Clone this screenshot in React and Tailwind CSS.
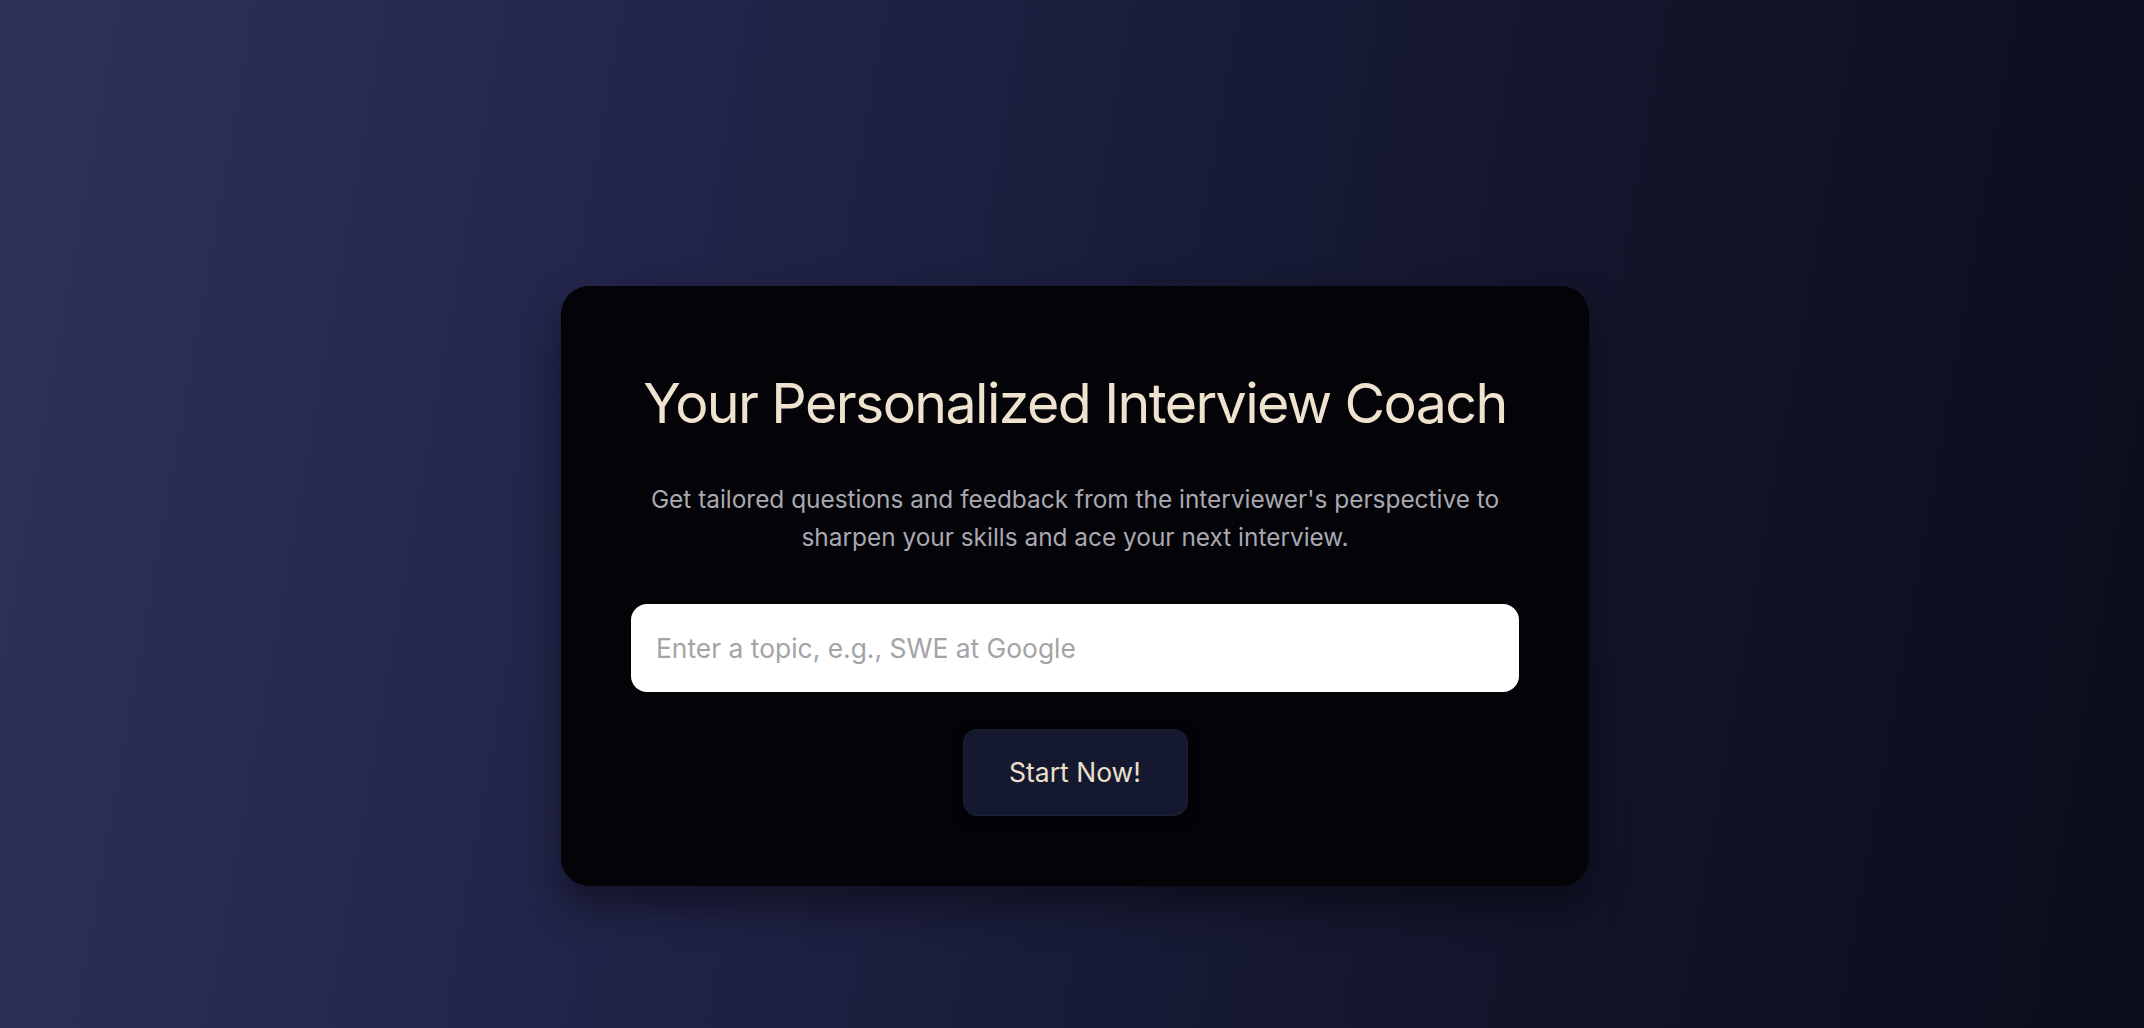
import { useState } from "react";

function App() {
  // Tema ingresado por el usuario
  const [topic, setTopic] = useState("");

  return (
    <div
      className="min-h-screen w-full flex flex-col items-center pt-[286px] bg-[linear-gradient(100deg,#30315a_0%,#22254a_30%,#14172e_65%,#0b0d1c_100%)]"
      style={{ fontFamily: "Inter, 'Noto Sans', sans-serif" }}
    >
      {/* Tarjeta principal */}
      <div className="ml-[6px] w-[1028px] rounded-[28px] bg-[#030308] shadow-[0_20px_40px_rgba(0,0,0,0.45)] px-[70px] pt-[87px] pb-[70px] flex flex-col items-center">
        <h1 className="text-[55.5px] leading-[60px] font-normal text-[#efe3cf] tracking-[-1.6px] text-center whitespace-nowrap">
          Your Personalized Interview Coach
        </h1>

        <p className="mt-[47px] text-[24.4px] leading-[38px] text-[#a9a9b2] text-center">
          Get tailored questions and feedback from the interviewer's perspective to
          <br />
          sharpen your skills and ace your next interview.
        </p>

        {/* Campo de tema */}
        <input
          type="text"
          value={topic}
          onChange={(e) => setTopic(e.target.value)}
          placeholder="Enter a topic, e.g., SWE at Google"
          className="mt-[48px] w-full h-[88px] rounded-[16px] bg-white px-[25px] text-[26.4px] text-[#222] placeholder:text-[#a3a3a8] outline-none"
        />

        {/* Botón de inicio */}
        <button className="mt-[37px] w-[225px] h-[87px] rounded-[14px] bg-[#151930] border border-[#1d2138] shadow-[0_4px_12px_rgba(0,0,0,0.5)] text-[26.5px] text-[#ece0cc]">
          Start Now!
        </button>
      </div>
    </div>
  );
}

export default App;
